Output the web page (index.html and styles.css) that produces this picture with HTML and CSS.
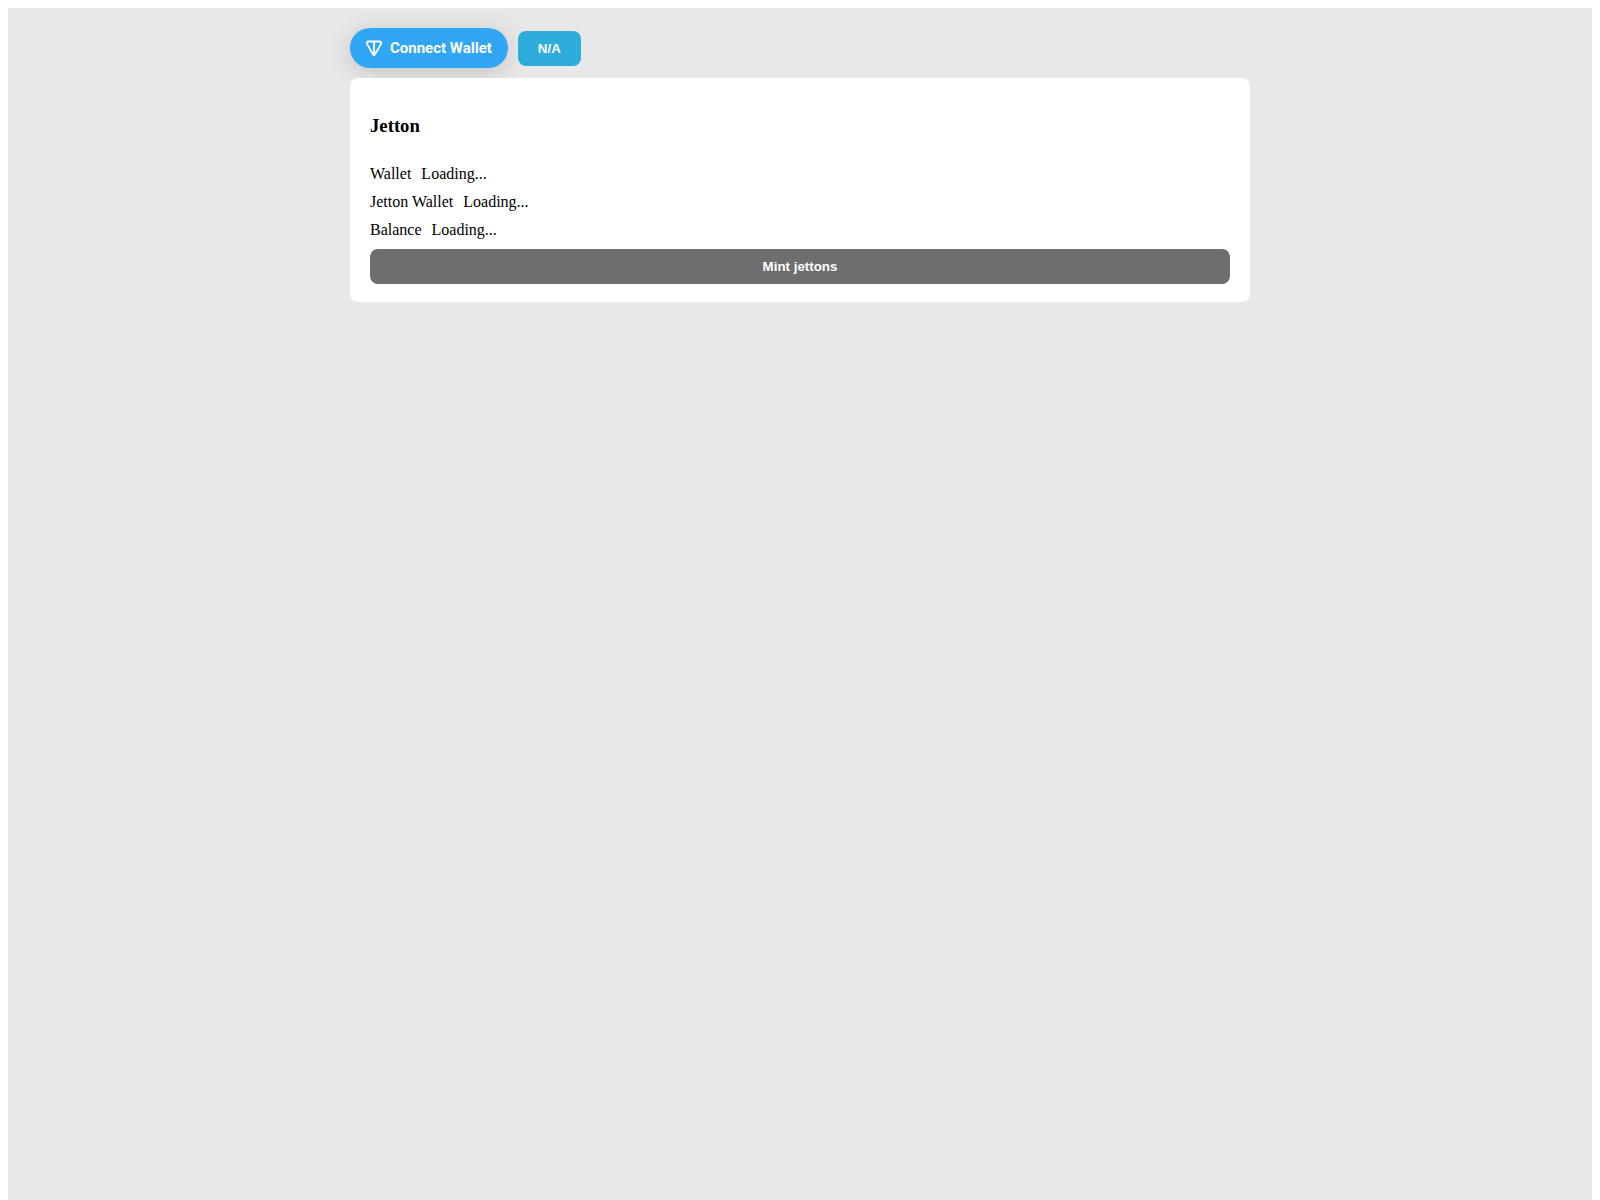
FILE: index.html
```html
<!DOCTYPE html>
<html lang="en">
<head>
    <meta charset="UTF-8">
    <meta name="viewport" content="width=device-width, initial-scale=1.0">
    <title>Jetton</title>
    <link rel="stylesheet" href="styles.css">
</head>
<body>
    <div class="app">
        <div class="container">
            <div class="row">
                <button type="button" class="connect">
                    <svg width="24" height="24" viewBox="0 0 24 24" fill="none" stroke="white" stroke-width="1.8" stroke-linejoin="round">
                        <path d="M6.4 5.5H17.6C18.9 5.5 19.6 6.8 19 7.9L12.9 18.5C12.5 19.2 11.5 19.2 11.1 18.5L5 7.9C4.4 6.8 5.1 5.5 6.4 5.5Z"/>
                        <path d="M12 5.5V18.5"/>
                    </svg>
                    Connect Wallet
                </button>
                <button type="button" class="button">N/A</button>
            </div>
            <div class="card">
                <h3>Jetton</h3>
                <div class="row">
                    <span>Wallet</span>
                    <span>Loading...</span>
                </div>
                <div class="row">
                    <span>Jetton Wallet</span>
                    <span>Loading...</span>
                </div>
                <div class="row">
                    <span>Balance</span>
                    <span>Loading...</span>
                </div>
                <button type="button" class="button" disabled>Mint jettons</button>
            </div>
        </div>
    </div>
</body>
</html>
```

FILE: styles.css
```css
body {
    margin: 8px;
    font-family: "Times New Roman", "Liberation Serif", serif;
    color: #000;
}

.app {
    min-height: 100vh;
    padding: 20px;
    background-color: #e8e8e8;
}

.container {
    max-width: 900px;
    margin: 0 auto;
    display: flex;
    flex-direction: column;
    gap: 10px;
}

.row {
    display: flex;
    align-items: center;
    gap: 10px;
}

.card {
    display: flex;
    flex-direction: column;
    gap: 10px;
    padding: 18px 20px;
    border-radius: 8px;
    background-color: #fff;
}

.button {
    padding: 10px 20px;
    border: 0;
    border-radius: 8px;
    background-color: #2eaddc;
    color: #fff;
    font-family: Arial, "Liberation Sans", sans-serif;
    font-weight: 700;
    cursor: pointer;
}

.button:disabled {
    background-color: #6e6e6e;
    cursor: default;
}

.connect {
    display: flex;
    align-items: center;
    gap: 4px;
    height: 40px;
    padding: 0 16px 0 12px;
    border: 0;
    border-radius: 20px;
    background-color: #31a6f5;
    box-shadow: 0 4px 24px rgba(0, 0, 0, 0.16);
    color: #fff;
    font-family: Roboto, sans-serif;
    font-size: 15px;
    font-weight: 700;
    cursor: pointer;
}
```
